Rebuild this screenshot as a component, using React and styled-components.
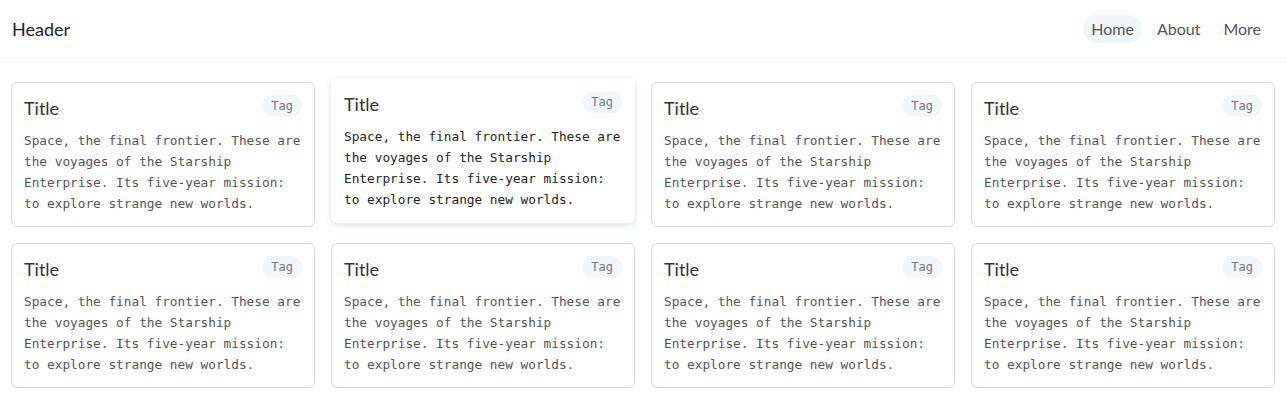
import React from 'react';
import styled, {createGlobalStyle} from 'styled-components';

const GlobalStyle = createGlobalStyle`
  body {
    margin: 0;
    background: #fff;
    font-family: Lato, "Noto Sans", sans-serif;
  }
`;

const Bar = styled.header`
  height: 58px;
  display: flex;
  align-items: center;
  justify-content: space-between;
  padding: 0 18px 0 12px;
  border-bottom: 1px solid #f1f5f9;
`;

const Brand = styled.div`
  font-size: 18px;
  color: #222;
  margin-top: -1px;
`;

const Nav = styled.nav`
  display: flex;
  gap: 7px;
`;

const NavItem = styled.a`
  font-size: 16px;
  line-height: 28px;
  padding: 0 8px;
  border-radius: 14px;
  color: #555;
  background: ${({active}) => (active ? '#f1f6f9' : 'transparent')};
`;

const Grid = styled.main`
  display: grid;
  grid-template-columns: repeat(4, 1fr);
  gap: 16px;
  padding: 23px 12px 12px 11px;
`;

const Card = styled.article`
  padding: 11px 12px 12px;
  border-radius: 6px;
  border: 1px solid ${({raised}) => (raised ? 'transparent' : '#d6d6da')};
  box-shadow: ${({raised}) => (raised ? '0 2px 6px rgba(120, 140, 160, 0.28)' : 'none')};
  transform: ${({raised}) => (raised ? 'translateY(-4px)' : 'none')};
  background: #fff;
`;

const CardHead = styled.div`
  display: flex;
  justify-content: space-between;
  align-items: flex-start;
  margin-bottom: 8px;
`;

const Title = styled.h2`
  margin: 0;
  font-size: 18px;
  font-weight: 400;
  line-height: 28px;
  color: #333;
`;

const Tag = styled.span`
  margin-top: 1px;
  padding: 2px 9px;
  border-radius: 11px;
  background: #f1f6f9;
  color: #777;
  font-family: "DejaVu Sans Mono", monospace;
  font-size: 12px;
  line-height: 18px;
`;

const Body = styled.p`
  margin: 0;
  font-family: "DejaVu Sans Mono", monospace;
  font-size: 12.75px;
  line-height: 21px;
  color: ${({raised}) => (raised ? '#222' : '#555')};
`;

const text =
  'Space, the final frontier. These are the voyages of the Starship Enterprise. Its five-year mission: to explore strange new worlds.';

const cards = Array.from({length: 8}, (_, i) => ({id: i, raised: i === 1}));

export default function App() {
  return (
    <>
      <GlobalStyle />
      <Bar>
        <Brand>Header</Brand>
        <Nav>
          <NavItem active>Home</NavItem>
          <NavItem>About</NavItem>
          <NavItem>More</NavItem>
        </Nav>
      </Bar>
      <Grid>
        {cards.map(({id, raised}) => (
          <Card key={id} raised={raised}>
            <CardHead>
              <Title>Title</Title>
              <Tag>Tag</Tag>
            </CardHead>
            <Body raised={raised}>{text}</Body>
          </Card>
        ))}
      </Grid>
    </>
  );
}
